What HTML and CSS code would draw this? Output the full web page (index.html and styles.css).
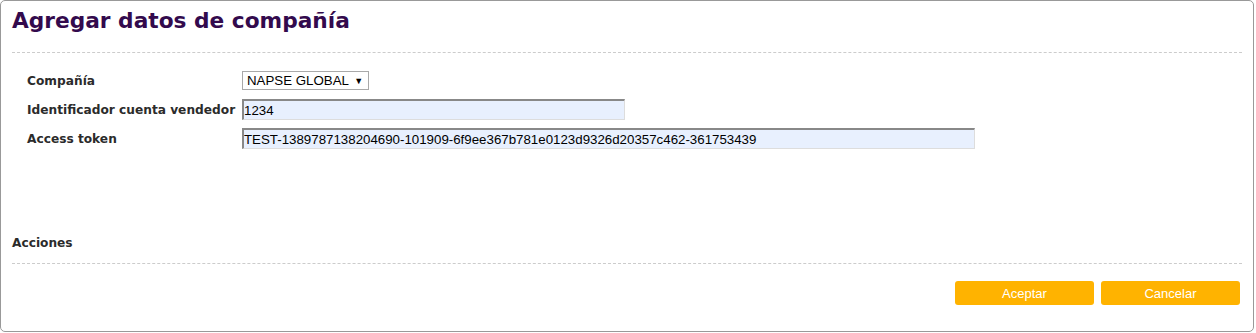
FILE: index.html
```html
<!DOCTYPE html>
<html>
<head>
    <title>Agregar datos de compañía</title>
<link rel="stylesheet" href="styles.css">
</head>
<body>
  <div class="panel">
    <h1 class="title">Agregar datos de compañía</h1>
    <div class="form">
      <div class="row">
        <label class="label">Compañía</label>
        <div class="select">NAPSE GLOBAL <span class="arrow">&#9660;</span></div>
      </div>
      <div class="row">
        <label class="label">Identificador cuenta vendedor</label>
        <input type="text" class="input-field short" value="1234">
      </div>
      <div class="row">
        <label class="label">Access token</label>
        <input type="text" class="input-field long" value="TEST-1389787138204690-101909-6f9ee367b781e0123d9326d20357c462-361753439">
      </div>
    </div>
    <div class="actions-title">Acciones</div>
    <div class="buttons">
      <button type="button" class="btn">Aceptar</button>
      <button type="button" class="btn">Cancelar</button>
    </div>
  </div>
</body>
</html>
```
FILE: styles.css
```css
body {
  margin: 0;
  background-color: white;
  font-family: "DejaVu Sans", Verdana, sans-serif;
}
.panel {
  box-sizing: border-box;
  width: 1254px;
  height: 332px;
  border: 1px solid #999;
  border-radius: 5px;
  padding: 0 11px;
}
.title {
  margin: 0;
  padding: 5px 0 16px 0;
  font-size: 21.7px;
  line-height: 30px;
  font-weight: bold;
  color: #330a4d;
  border-bottom: 1px dashed #ccc;
}
.form {
  padding: 18px 0 0 15px;
  height: 165px;
}
.row {
  display: flex;
  align-items: center;
  margin-bottom: 8px;
}
.row:first-child {
  margin-bottom: 9px;
}
.label {
  width: 215px;
  font-size: 12.2px;
  font-weight: bold;
  color: #2b2b2b;
}
.select {
  box-sizing: border-box;
  width: 127px;
  height: 19px;
  border: 1px solid #a9a9a9;
  font-family: "Liberation Sans", Arial, sans-serif;
  font-size: 13.3px;
  line-height: 17px;
  padding-left: 4px;
  color: black;
}
.arrow {
  font-size: 9px;
  margin-left: 2px;
  vertical-align: 1px;
}
.input-field {
  box-sizing: border-box;
  height: 21px;
  margin: 0;
  padding: 0;
  border: 1px solid #ddd;
  border-top: 2px solid #888;
  border-left: 2px solid #888;
  background-color: #e8f0fe;
  font-family: "Liberation Sans", Arial, sans-serif;
  font-size: 13.3px;
  color: black;
}
.short {
  width: 383px;
}
.long {
  width: 733px;
}
.actions-title {
  font-size: 12.2px;
  font-weight: bold;
  color: #2b2b2b;
  padding-bottom: 13px;
  border-bottom: 1px dashed #ccc;
}
.buttons {
  display: flex;
  justify-content: flex-end;
  gap: 7px;
  padding: 17px 2px 0 0;
}
.btn {
  width: 139px;
  height: 24px;
  border: none;
  border-radius: 3px;
  background-color: #ffb300;
  color: white;
  font-family: "Liberation Sans", Arial, sans-serif;
  font-size: 13px;
}
```
